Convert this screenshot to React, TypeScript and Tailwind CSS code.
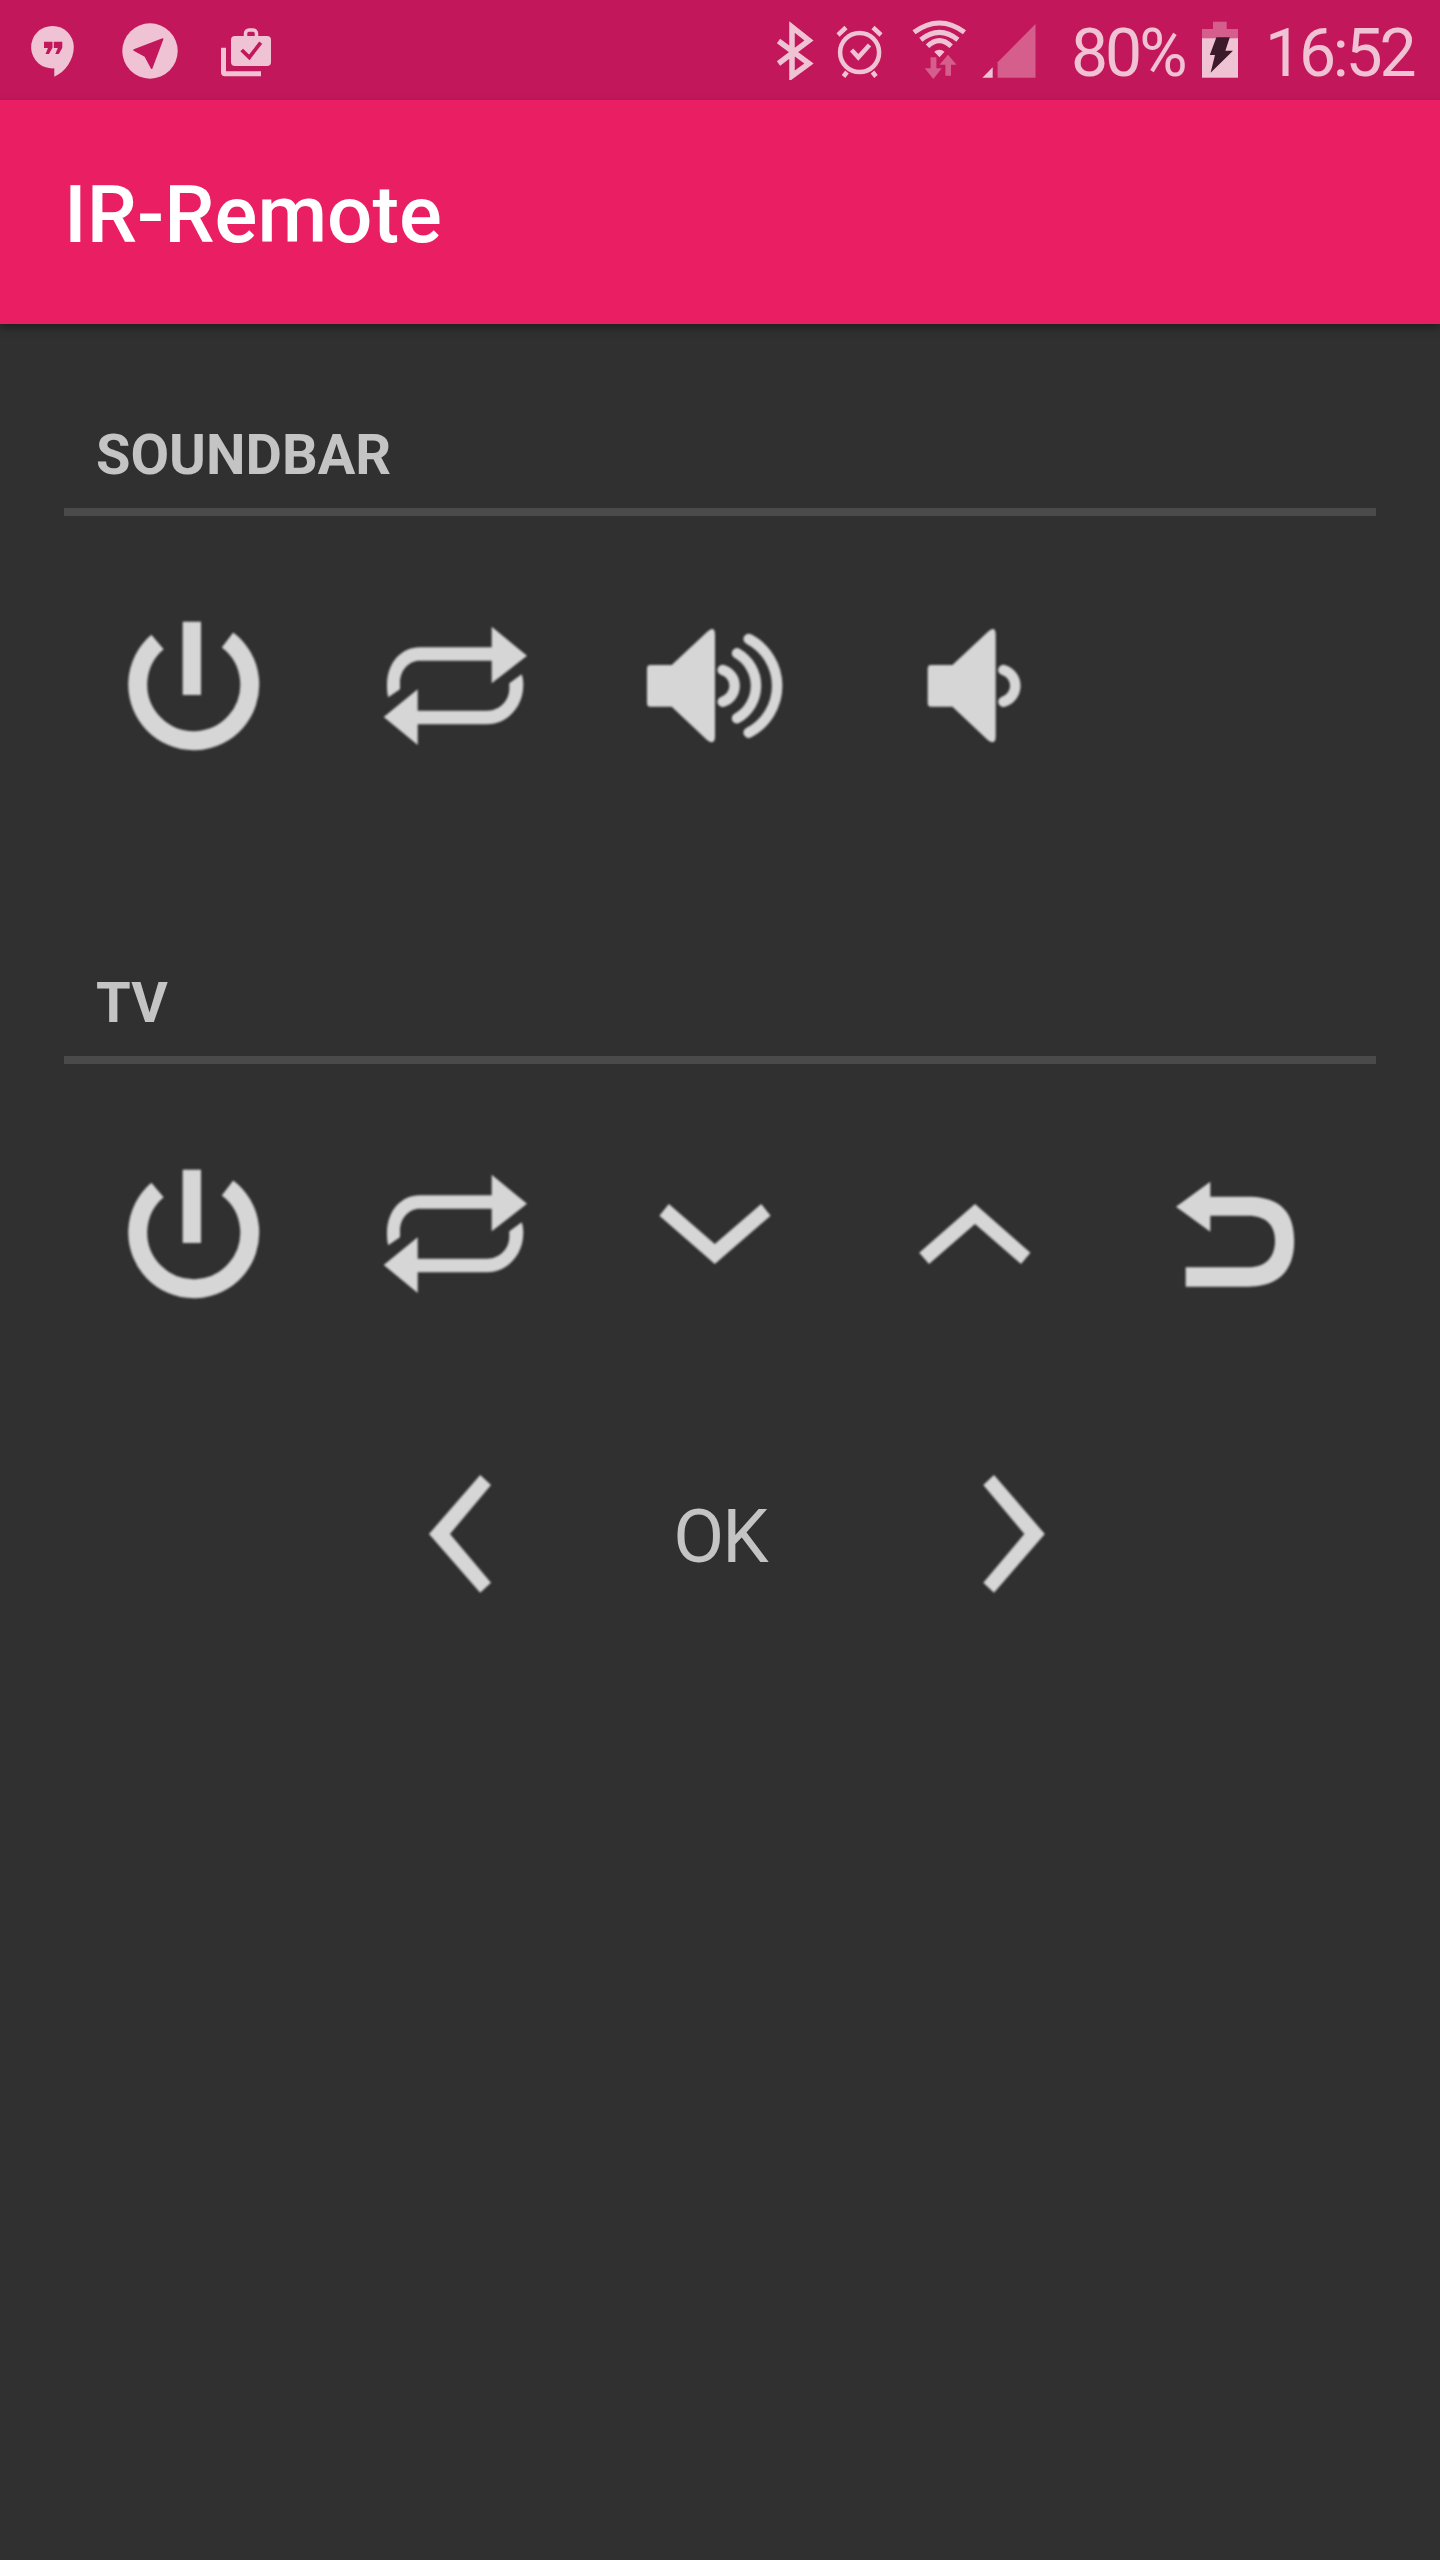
import React from "react";

const BAR = "#f0c3d4";
const DIM = "#d55e8d";
const RED = "#c2185b";

function Box({ children }: { children: React.ReactNode }) {
  return (
    <button className="flex h-[160px] w-[160px] shrink-0 items-center justify-center">
      <svg viewBox="0 0 160 160" className="h-[160px] w-[160px] blur-[0.8px]" fill="#d6d6d6">
        {children}
      </svg>
    </button>
  );
}

const Power = () => (
  <Box>
    <path d="M43.5 37A56 56 0 1 0 113.5 35" fill="none" stroke="#d6d6d6" strokeWidth="19" />
    <rect x="68.7" y="16.7" width="18.3" height="73.3" />
  </Box>
);

const Repeat = () => (
  <Box>
    <path d="M13.3 92.3C12 88 12 84 12 80C12 58 26 42.3 45 42.3H116.7V21.7L152 50.7L116.7 78.3V55.7H45C33 55.7 25 66 25 78V84.3Z" />
    <path d="M8.7 112L42.7 84.3V105.7H112C125 105.7 134.3 95 134.3 84V78.3L146.7 69.3C148 73 148.3 77 148.3 80C148.3 102 132 119.3 112 119.3H42.7V140Z" />
  </Box>
);

const SpeakerBody = () => (
  <path d="M15 60H36.7L72 27Q80 20 80 30V131Q80 141 72 135L36.7 101.7H15Q12 101.7 12 98V64Q12 60 15 60Z" />
);
const Arc = ({ d }: { d: string }) => (
  <path d={d} fill="none" stroke="#d6d6d6" strokeWidth="10.5" strokeLinecap="round" />
);

const VolumeUp = () => (
  <Box>
    <SpeakerBody />
    <Arc d="M87.7 65A16.5 16.5 0 0 1 87.7 96.7" />
    <Arc d="M102 48.3A37.3 37.3 0 0 1 102 113.3" />
    <Arc d="M113.7 34A52.8 52.8 0 0 1 113.7 127.7" />
  </Box>
);

const VolumeDown = () => (
  <Box>
    <g transform="translate(19.7 0)">
      <SpeakerBody />
      <Arc d="M87.7 65A16.5 16.5 0 0 1 87.7 96.7" />
    </g>
  </Box>
);

const Down = () => (
  <Box>
    <polygon points="33.8,51 79.8,91 126.2,51 135.6,62.7 79.8,111 24.4,62.7" />
  </Box>
);
const Up = () => (
  <Box>
    <polygon points="79,51 134.4,99.7 125,111 79,71 33,111 23.2,99.7" />
  </Box>
);
const Back = () => (
  <Box>
    <path d="M20 53.7L54.3 28.7V43.7H92C125 43.7 138.2 60 138.2 88C138.2 118 122 133.7 92 133.7H29.7V114.3H92C110 114.3 119 104 119 88C119 72 110 62.7 92 62.7H54.3V78.7Z" />
  </Box>
);
const Left = () => (
  <Box>
    <polygon points="100.2,22 111,32 70,81 111,129.7 100.2,139.7 49,81" />
  </Box>
);
const Right = () => (
  <Box>
    <polygon points="60,22 49.3,32 90.3,81 49.3,129.7 60,139.7 110.8,81" />
  </Box>
);

function Section({ title, children }: { title: string; children: React.ReactNode }) {
  return (
    <section>
      <div className="flex h-[66px] items-center pl-[32px] pt-[3px] text-[56px] font-bold leading-none text-[#c4c4c4]">{title}</div>
      <div className="mt-[22px] h-[8px] bg-[#4a4a4a]" />
      <div className="mt-[89px] flex">{children}</div>
    </section>
  );
}

function Cell({ children }: { children: React.ReactNode }) {
  return <div className="flex w-[260.5px] justify-center">{children}</div>;
}

function StatusBar() {
  return (
    <div className="flex h-[100px] items-center bg-[#c2185b] text-[#f0c3d4]">
      <svg viewBox="30 20 46 60" className="ml-[30px] h-[60px] w-[46px] shrink-0">
        <path d="M52.8 26A21 21 0 0 1 73.8 47C73.8 60 65 72 54.3 76.7V68.3A21.2 21.2 0 1 1 52.8 26Z" fill={BAR} />
        <path d="M44 41.7h8.5v6L49 54h-3.5l2.5-6h-4zM53.8 41.7h8.5v6L58.8 54h-3.5l2.5-6h-4z" fill={RED} />
      </svg>
      <svg viewBox="120 20 60 60" className="ml-[44px] h-[60px] w-[60px] shrink-0">
        <circle cx="150" cy="51" r="27.7" fill={BAR} />
        <path d="M162.7 39L151.7 68.3L145 56L134 50Z" fill={RED} stroke={RED} strokeWidth="1.5" strokeLinejoin="round" />
      </svg>
      <svg viewBox="216 20 60 60" className="ml-[36px] h-[60px] w-[60px] shrink-0">
        <rect x="231" y="36" width="40" height="30" rx="4" fill={BAR} />
        <rect x="245.5" y="30" width="11" height="9" rx="3.5" fill="none" stroke={BAR} strokeWidth="3.5" />
        <path d="M241.7 50L249.3 57.3L260.7 42.7" fill="none" stroke={RED} strokeWidth="3.8" />
        <path d="M221 47.7h5v23.5h35v5h-36q-4 0-4-4z" fill={BAR} />
      </svg>
      <svg viewBox="774 20 40 60" className="ml-[498px] h-[60px] w-[40px] shrink-0">
        <path d="M778.5 41L809 63.5L792 76V27L809 40.5L778.5 63.5" fill="none" stroke={BAR} strokeWidth="5.5" />
      </svg>
      <svg viewBox="834 20 52 60" className="ml-[20px] h-[60px] w-[52px] shrink-0" fill="none" stroke={BAR} strokeWidth="4.5">
        <circle cx="859.6" cy="52.5" r="19.5" />
        <path d="M838 35L846 27.5M873 27.5L881 35M847 72L843.5 76.5M872.5 72L876 76.5" />
        <path d="M851.6 50L858.3 57.3L869.5 45" />
      </svg>
      <svg viewBox="908 20 62 62" className="ml-[22px] h-[62px] w-[62px] shrink-0">
        <g fill="none" stroke={BAR} strokeWidth="5">
          <path d="M914 33.3Q939.5 14.7 964.5 33.3" />
          <path d="M920.8 40.7Q939.5 25.9 957.9 40.7" />
          <path d="M927.5 47.3Q939.5 36 951.2 47.3" />
        </g>
        <path d="M934.2 52.7Q939.5 49 944.5 52.7L939.5 58.3Z" fill={BAR} />
        <path d="M930.6 58.3H936.4V69.3H941.8L933.3 80L924.8 69.3H930.6Z" fill={DIM} />
        <path d="M945.4 76.7H951V65.7H956.5L948 55.7L939.5 65.7H945.4Z" fill={DIM} />
      </svg>
      <svg viewBox="980 20 58 60" className="ml-[10px] h-[60px] w-[58px] shrink-0">
        <polygon points="1035.5,24 1035.5,77.7 997.6,77.7 997.6,62.3" fill={DIM} />
        <polygon points="992.7,67.3 992.7,77.7 982.4,77.7" fill={BAR} />
      </svg>
      <span className="ml-[33px] w-[130px] shrink-0 pt-[8px] text-[66px] font-normal leading-none tracking-[-3px]">80%</span>
      <svg viewBox="1200 20 38 60" className="h-[60px] w-[38px] shrink-0">
        <rect x="1212" y="21.7" width="13.7" height="8" fill={DIM} />
        <rect x="1201" y="29" width="36" height="10" fill={DIM} />
        <rect x="1201" y="38.3" width="36" height="39.4" fill={BAR} />
        <polygon points="1215.4,37.3 1228.8,37.3 1224.4,50.7 1232,50.7 1209.6,72.7 1214,55 1208.8,55" fill="#3c1a29" />
      </svg>
      <span className="ml-[26px] shrink-0 pt-[8px] text-[66px] font-normal leading-none tracking-[-3.2px]">16:52</span>
    </div>
  );
}

export default function App() {
  return (
    <div className="h-[2560px] w-[1440px] overflow-hidden bg-[#303030] font-['Roboto',sans-serif]">
      <StatusBar />
      <header className="relative z-10 flex h-[224px] items-center bg-[#e91e63] pl-[64px] pt-[6px] text-[80px] font-medium leading-none text-white shadow-[0_4px_8px_rgba(0,0,0,0.35)]">
        IR-Remote
      </header>
      <main className="px-[64px] pt-[96px]">
        <Section title="SOUNDBAR">
          <Cell><Power /></Cell>
          <Cell><Repeat /></Cell>
          <Cell><VolumeUp /></Cell>
          <Cell><VolumeDown /></Cell>
        </Section>
        <div className="mt-[203px]">
          <Section title="TV">
            <Cell><Power /></Cell>
            <Cell><Repeat /></Cell>
            <Cell><Down /></Cell>
            <Cell><Up /></Cell>
            <Cell><Back /></Cell>
          </Section>
        </div>
        <div className="mt-[140px] flex pl-[316px]">
          <Left />
          <div className="ml-[100px] flex h-[160px] w-[160px] items-center justify-center pt-[8px] text-[74px] font-normal leading-none tracking-[-2px] text-[#c4c4c4]">OK</div>
          <div className="ml-[134px]"><Right /></div>
        </div>
      </main>
    </div>
  );
}
